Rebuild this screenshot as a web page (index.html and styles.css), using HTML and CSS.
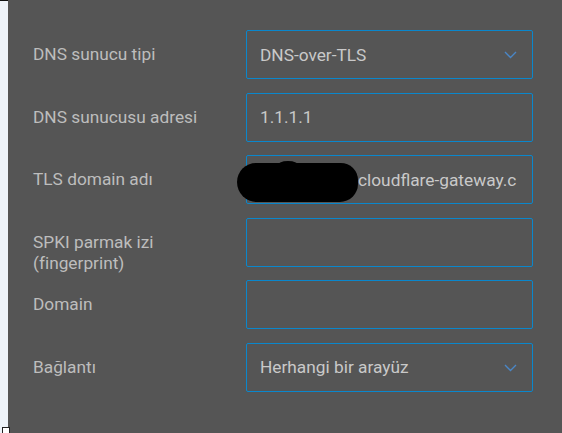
FILE: index.html
```html
<!DOCTYPE html>
<html lang="tr">
<head>
    <meta charset="UTF-8">
    <meta name="viewport" content="width=device-width, initial-scale=1.0">
    <title>DNS ayarları</title>
    <link rel="stylesheet" href="styles.css">
</head>
<body>
    <div class="page">
        <div class="side-strip"></div>
        <div class="panel">
            <div class="form">
                <div class="label">DNS sunucu tipi</div>
                <div class="field select">
                    <span class="value">DNS-over-TLS</span>
                    <svg class="chevron" width="13" height="8" viewBox="0 0 13 8"><path d="M1 1 L6.5 6.5 L12 1" fill="none" stroke="#4a86c6" stroke-width="1.4"/></svg>
                </div>

                <div class="label">DNS sunucusu adresi</div>
                <div class="field"><span class="value">1.1.1.1</span></div>

                <div class="label">TLS domain adı</div>
                <div class="field redacted">
                    <span class="value shifted">cloudflare-gateway.c</span>
                    <div class="blob"></div>
                </div>

                <div class="label">SPKI parmak izi<br>(fingerprint)</div>
                <div class="field"></div>

                <div class="label">Domain</div>
                <div class="field"></div>

                <div class="label">Bağlantı</div>
                <div class="field select">
                    <span class="value">Herhangi bir arayüz</span>
                    <svg class="chevron" width="13" height="8" viewBox="0 0 13 8"><path d="M1 1 L6.5 6.5 L12 1" fill="none" stroke="#4a86c6" stroke-width="1.4"/></svg>
                </div>
            </div>
        </div>
    </div>
    <div class="corner-box"></div>
</body>
</html>
```

FILE: styles.css
```css
* {
    margin: 0;
    padding: 0;
    box-sizing: border-box;
}

html, body {
    height: 100%;
}

body {
    font-family: Roboto, "Liberation Sans", sans-serif;
    background: #555555;
    overflow: hidden;
}

.page {
    display: flex;
    height: 100%;
}

.side-strip {
    width: 8px;
    flex-shrink: 0;
    background: #eef3f9;
    border-top: 1px solid #111;
}

.panel {
    flex: 1;
    background: #555555;
    padding: 30px 0 0 25px;
}

.form {
    display: grid;
    grid-template-columns: 213px 287px;
    grid-auto-rows: 49px;
    row-gap: 13.5px;
}

.label {
    color: #bdbdbd;
    font-size: 17.3px;
    line-height: 21px;
    padding-top: 14px;
    white-space: nowrap;
}

.field {
    position: relative;
    height: 49px;
    border: 1px solid #0a87cc;
    border-radius: 2px;
    display: flex;
    align-items: center;
    padding: 0 14px 0 13px;
}

.value {
    color: #c9c9c9;
    font-size: 17.3px;
    white-space: nowrap;
}

.select .value {
    flex: 1;
}

.chevron {
    margin-right: 1px;
    margin-top: 1px;
}

.shifted {
    padding-left: 98px;
}

.blob {
    position: absolute;
    left: -10px;
    top: 7px;
    width: 121px;
    height: 39px;
    background: #000;
    border-radius: 20px 18px 19px 21px;
}

.blob::before {
    content: '';
    position: absolute;
    left: 40px;
    top: -2px;
    width: 22px;
    height: 10px;
    background: #000;
    border-radius: 50%;
}

.corner-box {
    position: absolute;
    left: 2px;
    bottom: 0;
    width: 8px;
    height: 6px;
    background: #fff;
    border: 1px solid #222;
    border-bottom: none;
}
```
